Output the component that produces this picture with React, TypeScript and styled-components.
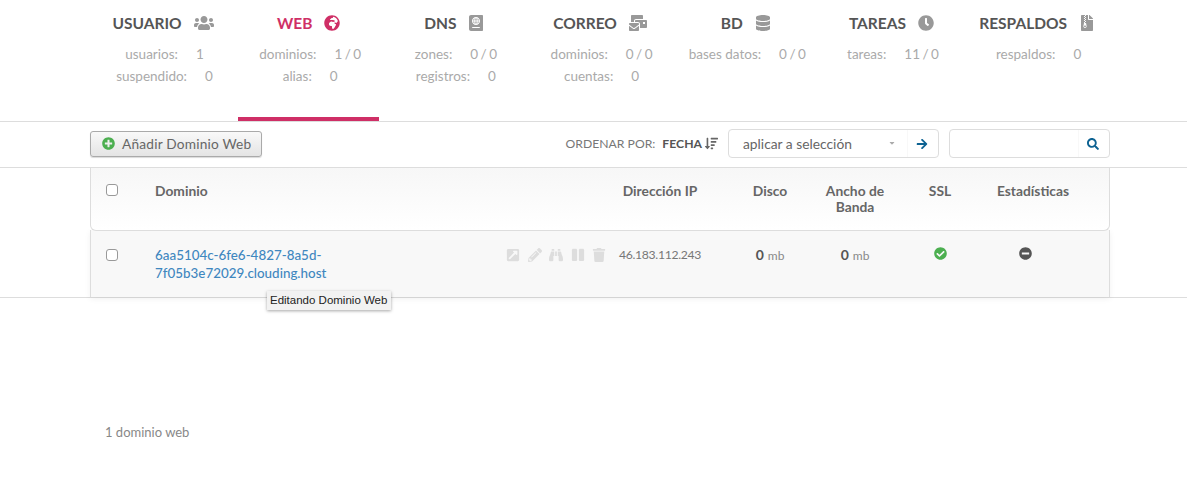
import React from "react";
import styled, { createGlobalStyle } from "styled-components";
import {
  FaUsers, FaGlobeAfrica, FaPassport, FaMailBulk, FaDatabase, FaClock, FaFileArchive,
  FaPlusCircle, FaSortAmountDown, FaArrowRight, FaSearch, FaExternalLinkSquareAlt,
  FaPencilAlt, FaBinoculars, FaPause, FaTrash, FaCheckCircle, FaMinusCircle, FaCaretDown,
} from "react-icons/fa";

const Global = createGlobalStyle`
  html, body { margin: 0; padding: 0; background: #fff; }
  body { font-family: "Lato", "Noto Sans", sans-serif; color: #555; width: 1187px; height: 478px; overflow: hidden; }
  * { box-sizing: border-box; }
`;

const Page = styled.div`display: flex; flex-direction: column; height: 478px;`;

const Nav = styled.nav`
  height: 122px;
  border-bottom: 1px solid #ddd;
  padding-left: 92.5px;
  display: flex;
  gap: 4.7px;
`;

const Tab = styled.div<{ $active?: boolean }>`
  width: 141px;
  height: 121px;
  padding-top: 13px;
  border-bottom: 4px solid ${(p) => (p.$active ? "#cf2f66" : "transparent")};
  display: flex;
  flex-direction: column;
  align-items: center;
`;

const TabTitle = styled.div<{ $active?: boolean; $icon?: number }>`
  display: flex;
  align-items: center;
  gap: 12px;
  height: 20px;
  font-size: 15.5px;
  font-weight: 700;
  white-space: nowrap;
  color: ${(p) => (p.$active ? "#cf2f66" : "#555")};
  svg { font-size: ${(p) => p.$icon ?? 16}px; color: ${(p) => (p.$active ? "#cf2f66" : "#999")}; }
`;

const Stats = styled.div`
  margin-top: 10px;
  padding-left: 3px;
  display: flex;
  flex-direction: column;
  align-items: center;
`;

const Stat = styled.div`
  height: 22px;
  line-height: 22px;
  font-size: 13.5px;
  color: #aaa;
  white-space: nowrap;
  span { margin-left: 18px; word-spacing: -1px; }
`;

const Toolbar = styled.div`
  height: 46px;
  border-bottom: 1px solid #ddd;
  padding: 7px 77px 0 90px;
  display: flex;
  align-items: flex-start;
`;

const AddButton = styled.button`
  margin-top: 2px;
  width: 172px;
  height: 26px;
  padding: 0 0 1px 11px;
  border: 1px solid #aaa;
  border-radius: 3px;
  background: linear-gradient(#f9f9f9, #e4e4e4);
  box-shadow: 0 1px 1px rgba(0, 0, 0, 0.15);
  display: flex;
  align-items: center;
  gap: 7px;
  font: 13.7px "Lato", sans-serif;
  color: #666;
  letter-spacing: 0.2px;
  svg { font-size: 13px; color: #4caf50; }
`;

const Sort = styled.div`
  margin-left: auto;
  height: 29px;
  display: flex;
  align-items: center;
  font-size: 12.2px;
  color: #777;
  b { margin-left: 7px; font-weight: 700; color: #555; }
  svg { margin-left: 3px; font-size: 13px; color: #666; }
`;

const Field = styled.div<{ $w: number; $ml: number }>`
  width: ${(p) => p.$w}px;
  margin-left: ${(p) => p.$ml}px;
  height: 29px;
  border: 1px solid #ddd;
  border-radius: 4px;
  display: flex;
  align-items: center;
  font-size: 13.8px;
  color: #666;
`;

const FieldText = styled.div`
  flex: 1;
  padding-left: 14px;
  padding-right: 11px;
  padding-bottom: 1px;
  display: flex;
  align-items: center;
  justify-content: space-between;
  svg { font-size: 8px; color: #aaa; }
`;

const FieldBtn = styled.div`
  width: 31px;
  height: 27px;
  border-left: 1px solid #f8f8f8;
  padding-right: 3px;
  display: flex;
  align-items: center;
  justify-content: center;
  svg { font-size: 12px; color: #0d6292; }
`;

const Table = styled.div`margin: 0 77px 0 90px; position: relative;`;

const Columns = styled.div`
  display: grid;
  grid-template-columns: 49px 455px 100px 105px 80px 90px 96px;
`;

const HeadRow = styled(Columns)`
  height: 63px;
  padding-left: 15px;
  padding-top: 15px;
  background: linear-gradient(#f7f7f7, #fff);
  border: 1px solid #ddd;
  border-top: none;
  border-radius: 0 0 6px 6px;
  font-size: 13.8px;
  font-weight: 700;
  line-height: 16px;
  color: #666;
  position: relative;
  z-index: 1;
`;

const BodyRow = styled(Columns)`
  height: 67px;
  margin-top: -1px;
  padding: 17px 0 0 15px;
  background: #f8f8f8;
  border-left: 1px solid #ddd;
  border-right: 1px solid #ddd;
  box-shadow: 0 2px 6px rgba(0, 0, 0, 0.06);
  font-size: 14px;
`;

const Cell = styled.div<{ $pl?: number; $pr?: number }>`
  text-align: center;
  padding-left: ${(p) => p.$pl ?? 0}px;
  padding-right: ${(p) => p.$pr ?? 0}px;
`;

const CheckBox = styled.div<{ $mt: number }>`
  width: 12px;
  height: 12px;
  margin-top: ${(p) => p.$mt}px;
  border: 1px solid #999;
  border-radius: 3px;
  background: #fff;
`;

const DomainCell = styled.div`
  display: flex;
  justify-content: space-between;
  align-items: flex-start;
  padding-right: 4px;
`;

const DomainLink = styled.a`
  margin-top: -1px;
  color: #3f87bf;
  line-height: 18px;
  font-size: 13.4px;
  font-weight: 500;
`;

const Actions = styled.div`
  display: flex;
  align-items: center;
  gap: 7.5px;
  height: 16px;
  svg { font-size: 14px; color: #ddd; }
`;

const Ip = styled(Cell)`color: #777; font-size: 12.2px; letter-spacing: -0.3px; line-height: 16px;`;

const Size = styled(Cell)`
  font-weight: 700;
  line-height: 16px;
  color: #555;
  small { margin-left: 4px; font-size: 12px; font-weight: 400; color: #888; }
`;

const StatusIcon = styled(Cell)<{ $c: string }>`
  line-height: 16px;
  svg { font-size: 13px; color: ${(p) => p.$c}; }
`;

const Tooltip = styled.div`
  position: absolute;
  left: 177px;
  top: 123px;
  height: 19px;
  padding: 0 4px 0 3px;
  line-height: 19px;
  font-size: 11.5px;
  font-family: "Liberation Sans", sans-serif;
  color: #222;
  background: #f2f2f2;
  box-shadow: 0 1px 3px rgba(0, 0, 0, 0.35);
  z-index: 3;
  white-space: nowrap;
`;

const Divider = styled.div`border-top: 1px solid #ddd;`;

const Footer = styled.div`
  margin-top: 126px;
  padding-left: 105px;
  font-size: 13px;
  color: #888;
`;

const tabs = [
  { t: "USUARIO", i: <FaUsers />, z: 20, s: [["usuarios:", "1"], ["suspendido:", "0"]] },
  { t: "WEB", i: <FaGlobeAfrica />, a: true, s: [["dominios:", "1 / 0"], ["alias:", "0"]] },
  { t: "DNS", i: <FaPassport />, s: [["zones:", "0 / 0"], ["registros:", "0"]] },
  { t: "CORREO", i: <FaMailBulk />, z: 18, s: [["dominios:", "0 / 0"], ["cuentas:", "0"]] },
  { t: "BD", i: <FaDatabase />, s: [["bases datos:", "0 / 0"]] },
  { t: "TAREAS", i: <FaClock />, s: [["tareas:", "11 / 0"]] },
  { t: "RESPALDOS", i: <FaFileArchive />, s: [["respaldos:", "0"]] },
];

export default function App() {
  return (
    <Page>
      <Global />
      <Nav>
        {tabs.map((x) => (
          <Tab key={x.t} $active={x.a}>
            <TabTitle $active={x.a} $icon={x.z}>{x.t}{x.i}</TabTitle>
            <Stats>
              {x.s.map(([k, v]) => (
                <Stat key={k}>{k}<span>{v}</span></Stat>
              ))}
            </Stats>
          </Tab>
        ))}
      </Nav>
      <Toolbar>
        <AddButton><FaPlusCircle />Añadir Dominio Web</AddButton>
        <Sort>ORDENAR POR:<b>FECHA</b><FaSortAmountDown /></Sort>
        <Field $w={211} $ml={10}>
          <FieldText>aplicar a selección<FaCaretDown /></FieldText>
          <FieldBtn><FaArrowRight /></FieldBtn>
        </Field>
        <Field $w={161} $ml={10}>
          <FieldText />
          <FieldBtn><FaSearch /></FieldBtn>
        </Field>
      </Toolbar>
      <Table>
        <HeadRow>
          <CheckBox $mt={1} />
          <div>Dominio</div>
          <Cell>Dirección IP</Cell>
          <Cell $pl={15}>Disco</Cell>
          <Cell>Ancho de Banda</Cell>
          <Cell>SSL</Cell>
          <Cell>Estadísticas</Cell>
        </HeadRow>
        <BodyRow>
          <CheckBox $mt={2} />
          <DomainCell>
            <DomainLink>6aa5104c-6fe6-4827-8a5d-<br />7f05b3e72029.clouding.host</DomainLink>
            <Actions>
              <FaExternalLinkSquareAlt />
              <FaPencilAlt />
              <FaBinoculars />
              <FaPause />
              <FaTrash />
            </Actions>
          </DomainCell>
          <Ip>46.183.112.243</Ip>
          <Size $pl={15}>0<small>mb</small></Size>
          <Size>0<small>mb</small></Size>
          <StatusIcon $c="#4caf50"><FaCheckCircle /></StatusIcon>
          <StatusIcon $c="#555" $pr={16}><FaMinusCircle /></StatusIcon>
        </BodyRow>
        <Tooltip>Editando Dominio Web</Tooltip>
      </Table>
      <Divider />
      <Footer>1 dominio web</Footer>
    </Page>
  );
}
